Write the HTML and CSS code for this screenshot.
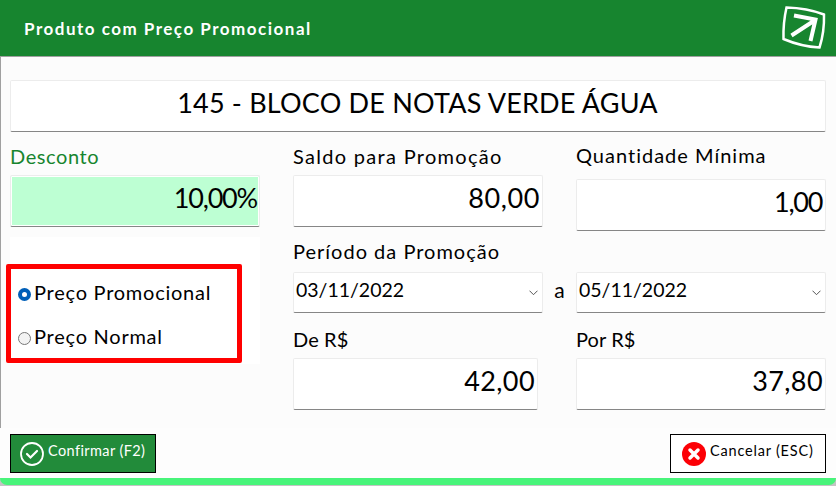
FILE: index.html
```html
<!DOCTYPE html>
<html lang="pt-BR">
<head>
    <meta charset="UTF-8">
    <title>Produto com Preço Promocional</title>
    <link rel="stylesheet" href="styles.css">
</head>
<body>
    <header class="header">
        <h1>Produto com Preço Promocional</h1>
        <svg class="logo" width="46" height="46" viewBox="0 0 46 46" fill="none" stroke="#fff">
            <path d="M5.500 2.500Q26 3 43 9.500Q43.500 27 38.500 42.500Q20 41.500 2.500 34Q2 18 5.500 2.500Z" stroke-width="2.500"/>
            <path d="M13 10.500L34.500 14.500L29.500 36M33.500 15.500L10.500 30.500" stroke-width="4"/>
        </svg>
    </header>

    <main class="content">
        <div class="box title">145 - BLOCO DE NOTAS VERDE ÁGUA</div>
        <div class="columns">
            <div class="left">
                <label class="label green">Desconto</label>
                <div class="box value discount">10,00%</div>
                <div class="options">
                    <label class="option"><span class="radio checked"></span><span class="text">Preço Promocional</span></label>
                    <label class="option"><span class="radio"></span><span class="text">Preço Normal</span></label>
                    <div class="highlight"></div>
                </div>
            </div>
            <div class="right">
                <div class="row">
                    <div class="field">
                        <label class="label balance">Saldo para Promoção</label>
                        <div class="box value">80,00</div>
                    </div>
                    <div class="field minimum">
                        <label class="label">Quantidade Mínima</label>
                        <div class="box value">1,00</div>
                    </div>
                </div>
                <label class="label period">Período da Promoção</label>
                <div class="dates">
                    <div class="box date">03/11/2022<svg width="9" height="6" viewBox="0 0 9 6" fill="none" stroke="#555"><path d="M.5 .7L4.500 4.700L8.500 .7"/></svg></div>
                    <span class="until">a</span>
                    <div class="box date">05/11/2022<svg width="9" height="6" viewBox="0 0 9 6" fill="none" stroke="#555"><path d="M.5 .7L4.500 4.700L8.500 .7"/></svg></div>
                </div>
                <div class="row prices">
                    <div class="field">
                        <label class="label">De R$</label>
                        <div class="box value from">42,00</div>
                    </div>
                    <div class="field">
                        <label class="label">Por R$</label>
                        <div class="box value">37,80</div>
                    </div>
                </div>
            </div>
        </div>
    </main>

    <footer class="footer">
        <button class="btn confirm">
            <svg width="24" height="24" viewBox="0 0 24 24" fill="none" stroke="#fff" stroke-width="1.800"><circle cx="12" cy="12" r="11"/><path d="M7 12L10.500 15.500L17 9" stroke-width="2.200" stroke-linecap="round"/></svg>
            <span>Confirmar (F2)</span>
        </button>
        <button class="btn cancel">
            <svg width="24" height="24" viewBox="0 0 24 24"><circle cx="12" cy="12" r="12" fill="#fc0006"/><path d="M8 8L16 16M16 8L8 16" stroke="#fff" stroke-width="3.500" stroke-linecap="round"/></svg>
            <span>Cancelar (ESC)</span>
        </button>
    </footer>
    <div class="bottom"><div class="bar"></div></div>
</body>
</html>
```
FILE: styles.css
```css
* {
    box-sizing: border-box;
}
body {
    margin: 0;
    height: 486px;
    overflow: hidden;
    background-color: #fdfdfd;
    font-family: Lato, sans-serif;
    color: #000;
}
.header {
    display: flex;
    align-items: center;
    justify-content: space-between;
    height: 56px;
    padding: 0 9px 0 24px;
    background-color: #17852f;
}
.header h1 {
    margin: 1px 0 0;
    font-size: 17px;
    line-height: 24px;
    letter-spacing: 1.5px;
    color: #fff;
}
.content {
    height: 372px;
    padding: 23px 10px 0 9px;
    border-top: 1px solid #a0a0a0;
    border-left: 1px solid #a0a0a0;
    background-color: #fcfcfc;
}
.box {
    display: flex;
    align-items: center;
    height: 52px;
    padding: 0 2px 7px;
    border: 1px solid #ececec;
    border-bottom-color: #868686;
    border-radius: 2px;
    background-color: #fff;
    font-size: 27px;
}
.title {
    justify-content: center;
    padding-right: 3px;
    letter-spacing: 0.2px;
}
.columns {
    display: flex;
    gap: 33px;
    margin-top: 13px;
}
.left {
    width: 250px;
}
.label {
    display: block;
    margin-bottom: 8px;
    font-size: 20px;
    line-height: 22px;
    letter-spacing: 1px;
}
.green {
    color: #17852f;
    letter-spacing: 0.6px;
}
.balance {
    letter-spacing: 1.3px;
}
.value {
    justify-content: flex-end;
    letter-spacing: 0.6px;
}
.discount {
    background-color: #bdffd3;
    box-shadow: inset 0 0 0 1px #fff;
    letter-spacing: -1.2px;
}
.options {
    position: relative;
    height: 127px;
    margin-top: 10px;
    padding: 45px 0 0 8px;
    background-color: #fff;
}
.option {
    display: flex;
    align-items: center;
    gap: 3px;
    height: 24px;
    margin-bottom: 20px;
    font-size: 20px;
    letter-spacing: 0.75px;
}
.option .text {
    margin-bottom: 4px;
}
.radio {
    width: 13px;
    height: 13px;
    border: 1px solid #777;
    border-radius: 50%;
    background-color: #f3f3f3;
}
.radio.checked {
    border: 4px solid #005fb8;
    background-color: #fff;
}
/* red frame over the price options */
.highlight {
    position: absolute;
    left: -4px;
    top: 27px;
    width: 236px;
    height: 99px;
    border: 5px solid #f00;
    border-radius: 2px;
}
.right {
    width: 533px;
}
.row {
    display: flex;
    gap: 33px;
}
.field {
    width: 250px;
}
.minimum {
    margin-top: -1px;
}
.minimum .label {
    margin-bottom: 13px;
}
.minimum .value {
    padding-right: 3px;
    letter-spacing: -1.3px;
}
.period {
    margin-top: 9px;
    margin-bottom: 10px;
}
.dates {
    display: flex;
}
.date {
    justify-content: space-between;
    width: 250px;
    height: 41px;
    padding: 0 4px 6px 2px;
    font-size: 19.5px;
}
.date svg {
    margin-top: 6px;
}
.until {
    width: 33px;
    line-height: 36px;
    text-align: center;
    font-size: 21px;
}
.prices {
    margin-top: 15px;
}
.prices .label {
    letter-spacing: 0.1px;
}
.prices .value {
    letter-spacing: 0.4px;
}
.from {
    width: 245px;
}
.footer {
    display: flex;
    justify-content: space-between;
    height: 50px;
    padding: 6px 10px 5px;
}
.btn {
    display: flex;
    align-items: center;
    gap: 4px;
    height: 39px;
    padding: 0 9px;
    border: 1px solid #000;
    font-family: inherit;
    font-size: 14.5px;
    white-space: nowrap;
}
.btn span {
    margin-bottom: 6px;
}
.confirm {
    width: 146px;
    background-color: #228b3a;
    color: #fff;
    letter-spacing: 0.4px;
}
.cancel {
    width: 156px;
    padding-left: 11px;
    background-color: #fff;
    color: #000;
    letter-spacing: 0.8px;
}
.bottom {
    height: 8px;
    background-color: #c4c4c4;
}
.bar {
    height: 7px;
    border-radius: 0 0 7px 7px;
    background-color: #48f47a;
}
```
